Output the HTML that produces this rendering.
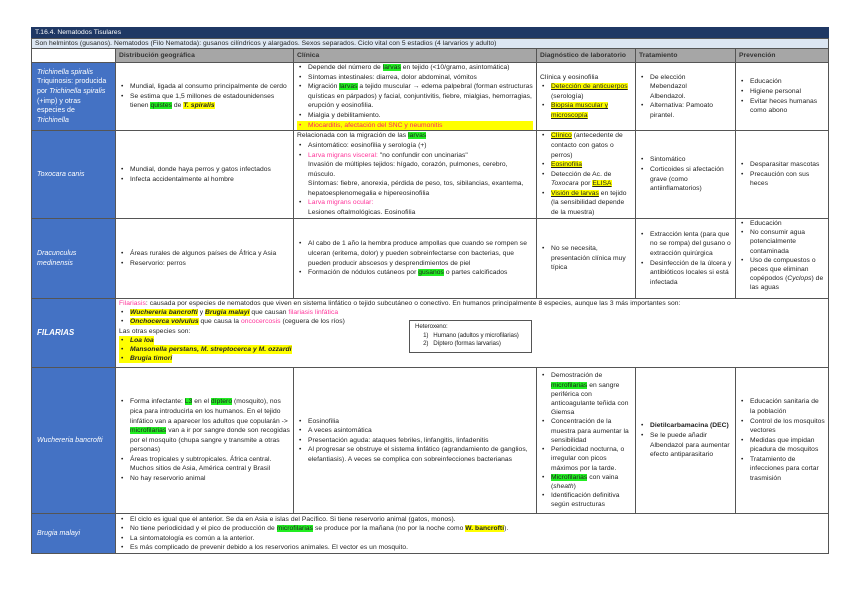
<!DOCTYPE html>
<html><head><meta charset="utf-8"><style>
*{margin:0;padding:0;box-sizing:border-box}
body{width:848px;height:599px;background:#fff;position:relative;font-family:"Liberation Sans",sans-serif;font-size:6.7px;color:#222;overflow:hidden;letter-spacing:0.05px}
.c{position:absolute;border:1px solid #555;display:flex;flex-direction:column;justify-content:center;padding:1px 3px;line-height:9.6px;overflow:hidden}
.n{background:#4472c4;color:#fff;font-style:italic;font-size:7px;padding-left:5px;padding-right:8px}
.h{background:#a6a6a6;font-weight:bold;color:#333;justify-content:center}
ul{list-style:none}
li{position:relative;padding-left:11px}
li:before{content:"•";position:absolute;left:2px}
.g{background:#22ee22}
.y{background:#ffff00}
.p{color:#ff3399}
.u{text-decoration:underline}
i{font-style:italic}
.pl li:before{color:#ff3399}
</style></head><body>
<div class="c" style="left:31px;top:27px;width:798px;height:12px;background:#1f3864;color:#fff;border-color:#1f3864;line-height:10px">T.16.4. Nematodos Tisulares</div>
<div class="c" style="left:31px;top:38px;width:798px;height:11px;background:#dce6f2;line-height:9px;padding-top:0">Son helmintos (gusanos). Nematodos (Filo Nematoda): gusanos cilíndricos y alargados. Sexos separados. Ciclo vital con 5 estadios (4 larvarios y adulto)</div>

<div class="c" style="left:31px;top:48px;width:85px;height:15px;background:#fff"></div>
<div class="c h" style="left:115px;top:48px;width:179px;height:15px">Distribución geográfica</div>
<div class="c h" style="left:293px;top:48px;width:244px;height:15px">Clínica</div>
<div class="c h" style="left:536px;top:48px;width:100px;height:15px">Diagnóstico de laboratorio</div>
<div class="c h" style="left:635px;top:48px;width:101px;height:15px">Tratamiento</div>
<div class="c h" style="left:735px;top:48px;width:94px;height:15px">Prevención</div>

<!-- Trichinella -->
<div class="c n" style="left:31px;top:62px;width:85px;height:69px"><i>Trichinella spiralis</i><span style="font-style:normal">Triquinosis: producida por <i>Trichinella spiralis</i> (+imp) y otras especies de <i>Trichinella</i></span></div>
<div class="c" style="left:115px;top:62px;width:179px;height:69px"><ul><li>Mundial, ligada al consumo principalmente de cerdo</li><li>Se estima que 1,5 millones de estadounidenses tienen <span class="g">quistes</span> de <b class="y"><i>T. spiralis</i></b></li></ul></div>
<div class="c" style="left:293px;top:62px;width:244px;height:69px;justify-content:flex-start;padding-top:0"><ul><li>Depende del número de <span class="g">larvas</span> en tejido (&lt;10/gramo, asintomática)</li><li>Síntomas intestinales: diarrea, dolor abdominal, vómitos</li><li>Migración <span class="g">larvas</span> a tejido muscular → edema palpebral (forman estructuras quísticas en párpados) y facial, conjuntivitis, fiebre, mialgias, hemorragias, erupción y eosinofilia.</li><li>Mialgia y debilitamiento.</li><li class="y p" style="color:#ff2266">Miocarditis, afectación del SNC y neumonitis</li></ul></div>
<div class="c" style="left:536px;top:62px;width:100px;height:69px">Clínica y eosinofilia<ul><li><span class="y u">Detección de anticuerpos</span> (serología)</li><li><span class="y u">Biopsia muscular y microscopía</span></li></ul></div>
<div class="c" style="left:635px;top:62px;width:101px;height:69px"><ul><li>De elección<br>Mebendazol<br>Albendazol.</li><li>Alternativa: Pamoato pirantel.</li></ul></div>
<div class="c" style="left:735px;top:62px;width:94px;height:69px"><ul><li>Educación</li><li>Higiene personal</li><li>Evitar heces humanas como abono</li></ul></div>

<!-- Toxocara -->
<div class="c n" style="left:31px;top:130px;width:85px;height:89px">Toxocara canis</div>
<div class="c" style="left:115px;top:130px;width:179px;height:89px"><ul><li>Mundial, donde haya perros y gatos infectados</li><li>Infecta accidentalmente al hombre</li></ul></div>
<div class="c" style="left:293px;top:130px;width:244px;height:89px"><div>Relacionada con la migración de las <span class="g">larvas</span></div><ul><li>Asintomático: eosinofilia y serología (+)</li><li class="pl"><span class="p">Larva migrans visceral:</span> "no confundir con uncinarias"<br>Invasión de múltiples tejidos: hígado, corazón, pulmones, cerebro, músculo.<br>Síntomas: fiebre, anorexia, pérdida de peso, tos, sibilancias, exantema, hepatoesplenomegalia e hipereosinofilia</li><li class="pl"><span class="p">Larva migrans ocular:</span><br>Lesiones oftalmológicas. Eosinofilia</li></ul></div>
<div class="c" style="left:536px;top:130px;width:100px;height:89px"><ul><li><span class="y u">Clínico</span> (antecedente de contacto con gatos o perros)</li><li><span class="y u">Eosinofilia</span></li><li>Detección de Ac. de <i>Toxocara</i> por <span class="y u">ELISA</span></li><li><span class="y u">Visión de larvas</span> en tejido (la sensibilidad depende de la muestra)</li></ul></div>
<div class="c" style="left:635px;top:130px;width:101px;height:89px"><ul><li>Sintomático</li><li>Corticoides si afectación grave (como antiinflamatorios)</li></ul></div>
<div class="c" style="left:735px;top:130px;width:94px;height:89px"><ul><li>Desparasitar mascotas</li><li>Precaución con sus heces</li></ul></div>

<!-- Dracunculus -->
<div class="c n" style="left:31px;top:218px;width:85px;height:81px">Dracunculus medinensis</div>
<div class="c" style="left:115px;top:218px;width:179px;height:81px"><ul><li>Áreas rurales de algunos países de África y Asia</li><li>Reservorio: perros</li></ul></div>
<div class="c" style="left:293px;top:218px;width:244px;height:81px"><ul><li>Al cabo de 1 año la hembra produce ampollas que cuando se rompen se ulceran (eritema, dolor) y pueden sobreinfectarse con bacterias, que pueden producir abscesos y desprendimientos de piel</li><li>Formación de nódulos cutáneos por <span class="g">gusanos</span> o partes calcificados</li></ul></div>
<div class="c" style="left:536px;top:218px;width:100px;height:81px"><ul><li>No se necesita, presentación clínica muy típica</li></ul></div>
<div class="c" style="left:635px;top:218px;width:101px;height:81px"><ul><li>Extracción lenta (para que no se rompa) del gusano o extracción quirúrgica</li><li>Desinfección de la úlcera y antibióticos locales si está infectada</li></ul></div>
<div class="c" style="left:735px;top:218px;width:94px;height:81px;justify-content:flex-start;padding-top:0;line-height:9.2px"><ul><li>Educación</li><li>No consumir agua potencialmente contaminada</li><li>Uso de compuestos o peces que eliminan copépodos (<i>Cyclops</i>) de las aguas</li></ul></div>

<!-- Filarias -->
<div class="c n" style="left:31px;top:298px;width:85px;height:70px;font-weight:bold;font-size:8px">FILARIAS</div>
<div class="c" style="left:115px;top:298px;width:714px;height:70px;justify-content:flex-start;padding-top:0;line-height:9.2px"><div><span class="p">Filariasis</span>: causada por especies de nematodos que viven en sistema linfático o tejido subcutáneo o conectivo. En humanos principalmente 8 especies, aunque las 3 más importantes son:</div><ul><li><b><i class="y">Wuchereria bancrofti</i></b> y <b><i class="y">Brugia malayi</i></b> que causan <span class="p">filariasis linfática</span></li><li><b><i class="y">Onchocerca volvulus</i></b> que causa la <span class="p">oncocercosis</span> (ceguera de los ríos)</li></ul><div>Las otras especies son:</div><ul><li class="y" style="width:max-content"><b><i>Loa loa</i></b></li><li class="y" style="width:max-content"><b><i>Mansonella perstans, M. streptocerca y M. ozzardi</i></b></li><li class="y" style="width:max-content"><b><i>Brugia timori</i></b></li></ul></div>
<div style="position:absolute;left:409px;top:320px;width:123px;height:33px;border:1px solid #555;background:#fff;padding:2px 5px;line-height:8.5px;font-size:6.2px;white-space:nowrap;letter-spacing:-0.1px">Heteroxeno:<br>&nbsp;&nbsp;&nbsp;&nbsp;&nbsp;1)&nbsp;&nbsp;&nbsp;Humano (adultos y microfilarias)<br>&nbsp;&nbsp;&nbsp;&nbsp;&nbsp;2)&nbsp;&nbsp;&nbsp;Díptero (formas larvarias)</div>

<!-- Wuchereria -->
<div class="c n" style="left:31px;top:367px;width:85px;height:147px">Wuchereria bancrofti</div>
<div class="c" style="left:115px;top:367px;width:179px;height:147px"><ul><li>Forma infectante: <span class="g">L3</span> en el <span class="g">díptero</span> (mosquito), nos pica para introducirla en los humanos. En el tejido linfático van a aparecer los adultos que copularán -&gt; <span class="g">microfilarias</span> van a ir por sangre donde son recogidas por el mosquito (chupa sangre y transmite a otras personas)</li><li>Áreas tropicales y subtropicales. África central. Muchos sitios de Asia, América central y Brasil</li><li>No hay reservorio animal</li></ul></div>
<div class="c" style="left:293px;top:367px;width:244px;height:147px"><ul><li>Eosinofilia</li><li>A veces asintomática</li><li>Presentación aguda: ataques febriles, linfangitis, linfadenitis</li><li>Al progresar se obstruye el sistema linfático (agrandamiento de ganglios, elefantiasis). A veces se complica con sobreinfecciones bacterianas</li></ul></div>
<div class="c" style="left:536px;top:367px;width:100px;height:147px;line-height:9.2px"><ul><li>Demostración de <span class="g">microfilarias</span> en sangre periférica con anticoagulante teñida con Giemsa</li><li>Concentración de la muestra para aumentar la sensibilidad</li><li>Periodicidad nocturna, o irregular con picos máximos por la tarde.</li><li><span class="g">Microfilarias</span> con vaina (<i>sheath</i>)</li><li>Identificación definitiva según estructuras</li></ul></div>
<div class="c" style="left:635px;top:367px;width:101px;height:147px"><ul><li><b>Dietilcarbamacina (DEC)</b></li><li>Se le puede añadir Albendazol para aumentar efecto antiparasitario</li></ul></div>
<div class="c" style="left:735px;top:367px;width:94px;height:147px"><ul><li>Educación sanitaria de la población</li><li>Control de los mosquitos vectores</li><li>Medidas que impidan picadura de mosquitos</li><li>Tratamiento de infecciones para cortar trasmisión</li></ul></div>

<!-- Brugia -->
<div class="c n" style="left:31px;top:513px;width:85px;height:41px">Brugia malayi</div>
<div class="c" style="left:115px;top:513px;width:714px;height:41px;line-height:9.5px"><ul><li>El ciclo es igual que el anterior. Se da en Asia e islas del Pacífico. Si tiene reservorio animal (gatos, monos).</li><li>No tiene periodicidad y el pico de producción de <span class="g">microfilarias</span> se produce por la mañana (no por la noche como <b class="y">W. bancrofti</b>).</li><li>La sintomatología es común a la anterior.</li><li>Es más complicado de prevenir debido a los reservorios animales. El vector es un mosquito.</li></ul></div>
</body></html>
